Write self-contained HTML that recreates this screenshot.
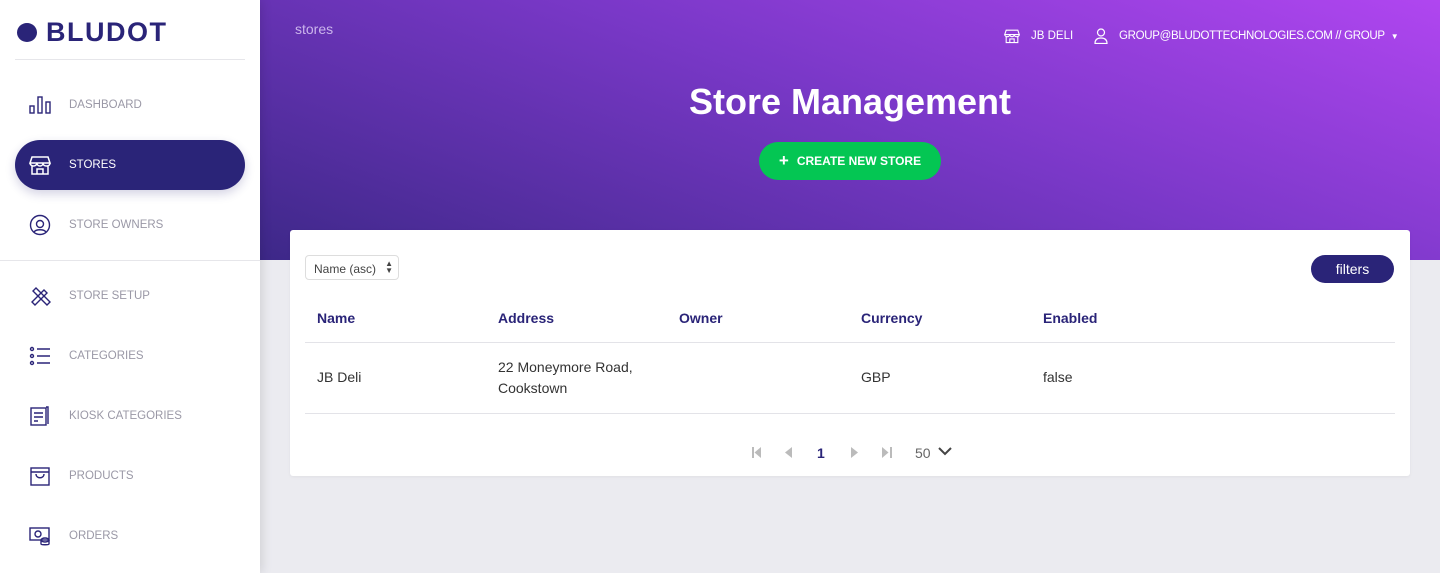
<!DOCTYPE html>
<html><head><style>
*{margin:0;padding:0;box-sizing:border-box}
body{width:1440px;height:573px;overflow:hidden;background:#ebebf0;font-family:"Liberation Sans",sans-serif;position:relative}
.side{position:absolute;left:0;top:0;width:260px;height:573px;background:#fff;box-shadow:2px 0 10px rgba(0,0,0,.12);z-index:3}
.logo{position:absolute;left:17px;top:17px;display:flex;align-items:center;color:#2a2478;font-size:27px;font-weight:bold;letter-spacing:1.5px}
.logo i{display:inline-block;width:20px;height:19px;border-radius:50%;background:#2a2478;margin-right:9px}
.hr{position:absolute;height:1px;background:#e6e6ea}
.item{position:absolute;left:15px;width:230px;height:50px;display:flex;align-items:center;font-size:11.5px;color:#9a98a6;letter-spacing:0}
.item svg{position:absolute;left:14px;width:22px;height:22px}
.item span{position:absolute;left:54px}
.item.act{background:#2a2478;color:#fff;border-radius:25px;box-shadow:0 4px 10px rgba(42,36,120,.2)}
.hdr{position:absolute;left:260px;top:0;width:1180px;height:260px;background:linear-gradient(200deg,#b046f0 0%,#7a38c8 45%,#3d2888 100%)}
.crumb{position:absolute;left:295px;top:21px;color:#cbb5ec;font-size:14px}
.top{position:absolute;top:28px;color:#fff;font-size:11.5px;display:flex;align-items:center}
h1{position:absolute;left:0;width:1700px;top:81px;text-align:center;color:#fff;font-size:36px;font-weight:bold}
.btn{position:absolute;left:759px;top:142px;width:182px;height:38px;border-radius:19px;background:#04c653;color:#fff;font-weight:bold;font-size:12px;display:flex;align-items:center;justify-content:center}
.card{position:absolute;left:290px;top:230px;width:1120px;height:246px;background:#fff;border-radius:3px;box-shadow:0 1px 3px rgba(0,0,0,.05)}
.sel{position:absolute;left:15px;top:25px;width:94px;height:25px;border:1px solid #ddd;border-radius:4px;font-size:12px;color:#444;padding:6px 8px}
.filt{position:absolute;right:16px;top:25px;width:83px;height:28px;border-radius:14px;background:#2a2478;color:#fff;font-size:14px;text-align:center;line-height:28px}
.th{position:absolute;top:80px;color:#2a2478;font-weight:bold;font-size:14px}
.td{position:absolute;color:#333;font-size:14px;line-height:21px}
.line{position:absolute;left:15px;width:1090px;height:1px;background:#e3e3e8}
</style></head><body>
<div class="side">
<div class="logo"><i></i>BLUDOT</div>
<div class="hr" style="left:15px;width:230px;top:59px"></div>
<div class="item" style="top:80px"><svg viewBox="0 0 22 22" fill="none" stroke="#2a2478" stroke-width="1.4"><rect x="1" y="12" width="4" height="7"/><rect x="9" y="3" width="4" height="16"/><rect x="17" y="8" width="4" height="11"/></svg><span>DASHBOARD</span></div>
<div class="item act" style="top:140px"><svg viewBox="0 0 22 22" fill="none" stroke="#fff" stroke-width="1.5"><path d="M3 3h16l2 6H1zM1 9c0 2 2 3 3.5 3S8 11 8 9c0 2 1.5 3 3 3s3-1 3-3c0 2 1.5 3 3.5 3S21 11 21 9M3 12v8h16v-8M8 20v-5h6v5"/></svg><span>STORES</span></div>
<div class="item" style="top:200px"><svg viewBox="0 0 22 22" fill="none" stroke="#2a2478" stroke-width="1.4"><circle cx="11" cy="11" r="9.5"/><circle cx="11" cy="10" r="3.5"/><path d="M5 18c2-3 10-3 12 0"/></svg><span>STORE OWNERS</span></div>
<div class="hr" style="left:0;width:260px;top:260px"></div>
<div class="item" style="top:271px"><svg viewBox="0 0 22 22" fill="none" stroke="#2a2478" stroke-width="1.4"><path d="M3 17L15 5l3 3L6 20zM4 6l3-3 14 14-3 3z"/></svg><span>STORE SETUP</span></div>
<div class="item" style="top:331px"><svg viewBox="0 0 22 22" fill="none" stroke="#2a2478" stroke-width="1.4"><circle cx="3" cy="4" r="1.5"/><circle cx="3" cy="11" r="1.5"/><circle cx="3" cy="18" r="1.5"/><path d="M8 4h13M8 11h13M8 18h13"/></svg><span>CATEGORIES</span></div>
<div class="item" style="top:391px"><svg viewBox="0 0 22 22" fill="none" stroke="#2a2478" stroke-width="1.4"><rect x="2" y="3" width="15" height="17"/><path d="M17 2h2v17M5 8h9M5 12h9M5 16h4"/></svg><span>KIOSK CATEGORIES</span></div>
<div class="item" style="top:451px"><svg viewBox="0 0 22 22" fill="none" stroke="#2a2478" stroke-width="1.4"><rect x="2" y="3" width="18" height="17"/><path d="M2 7h18M7 9c0 5 8 5 8 0"/></svg><span>PRODUCTS</span></div>
<div class="item" style="top:511px"><svg viewBox="0 0 22 22" fill="none" stroke="#2a2478" stroke-width="1.4"><rect x="1" y="3" width="19" height="12"/><circle cx="9" cy="9" r="3"/><ellipse cx="16" cy="15" rx="4" ry="2"/><path d="M12 15v4c0 1 8 1 8 0v-4"/></svg><span>ORDERS</span></div>
</div>
<div class="hdr"></div>
<div class="crumb">stores</div>
<div class="top" style="left:1004px"><svg width="16" height="16" viewBox="0 0 22 22" fill="none" stroke="#fff" stroke-width="1.5"><path d="M3 3h16l2 6H1zM1 9c0 2 2 3 3.5 3S8 11 8 9c0 2 1.5 3 3 3s3-1 3-3c0 2 1.5 3 3.5 3S21 11 21 9M3 12v8h16v-8M8 20v-5h6v5"/></svg><span style="margin-left:11px">JB DELI</span></div>
<div class="top" style="left:1094px"><svg width="14" height="16" viewBox="0 0 14 16" fill="none" stroke="#fff" stroke-width="1.2"><circle cx="7" cy="4.5" r="3.5"/><path d="M1 15.5c0-4 2.5-5.5 6-5.5s6 1.5 6 5.5z"/></svg><span style="margin-left:11px;letter-spacing:-0.3px">GROUP@BLUDOTTECHNOLOGIES.COM // GROUP</span><span style="margin-left:6px;font-size:8px">▼</span></div>
<h1>Store Management</h1>
<div class="btn"><span style="font-size:17px;margin-right:8px">+</span>CREATE NEW STORE</div>
<div class="card">
<div class="sel">Name (asc)<span style="position:absolute;right:5px;top:4px;font-size:8px;line-height:7px">▲<br>▼</span></div>
<div class="filt">filters</div>
<div class="th" style="left:27px">Name</div>
<div class="th" style="left:208px">Address</div>
<div class="th" style="left:389px">Owner</div>
<div class="th" style="left:571px">Currency</div>
<div class="th" style="left:753px">Enabled</div>
<div class="line" style="top:112px"></div>
<div class="td" style="left:27px;top:137px">JB Deli</div>
<div class="td" style="left:208px;top:127px">22 Moneymore Road,<br>Cookstown</div>
<div class="td" style="left:571px;top:137px">GBP</div>
<div class="td" style="left:753px;top:137px">false</div>
<div class="line" style="top:183px"></div>
<svg style="position:absolute;left:462px;top:217px" width="10" height="11" viewBox="0 0 10 11" fill="#bbb"><rect x="0" y="0" width="2" height="11"/><path d="M9 0v11L2.5 5.5z"/></svg>
<svg style="position:absolute;left:495px;top:217px" width="8" height="11" viewBox="0 0 8 11" fill="#bbb"><path d="M7 0v11L0 5.5z"/></svg>
<div class="td" style="left:527px;top:213px;color:#2a2478;font-weight:bold">1</div>
<svg style="position:absolute;left:561px;top:217px" width="8" height="11" viewBox="0 0 8 11" fill="#bbb"><path d="M0 0v11l7-5.5z"/></svg>
<svg style="position:absolute;left:592px;top:217px" width="10" height="11" viewBox="0 0 10 11" fill="#bbb"><path d="M0 0v11l6.5-5.5z"/><rect x="8" y="0" width="2" height="11"/></svg>
<div class="td" style="left:625px;top:213px;color:#666">50</div>
<svg style="position:absolute;left:648px;top:217px" width="14" height="9" viewBox="0 0 14 9" fill="none" stroke="#444" stroke-width="2"><path d="M1 1l6 6 6-6"/></svg>
</div>
</body></html>
